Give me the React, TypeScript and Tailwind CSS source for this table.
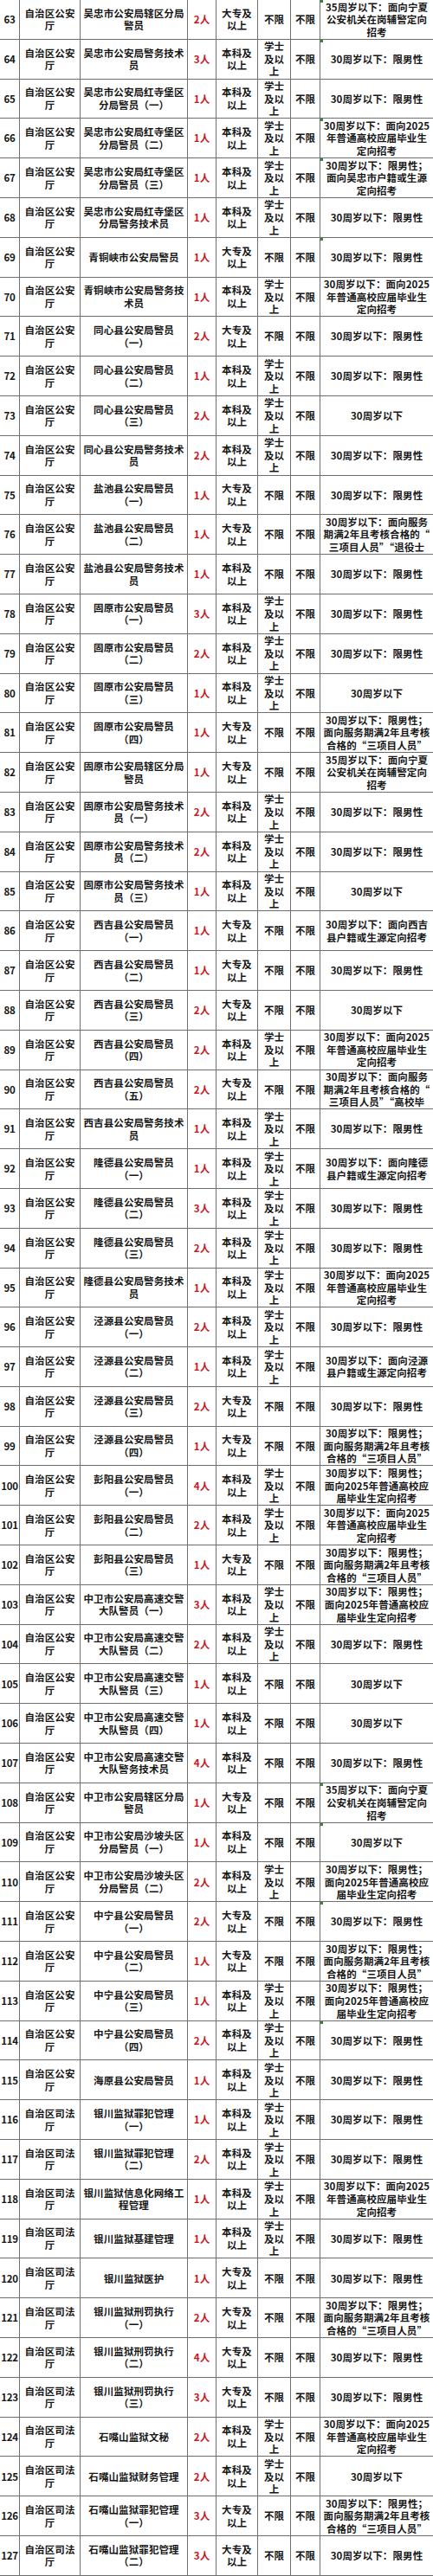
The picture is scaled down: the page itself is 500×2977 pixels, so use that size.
import React from 'react';

// [序号, 职位, 人数, 学历(D=大专 B=本科), 学士学位?, 备注, 绿色标记?]
type Row = [number, string, number, 'D' | 'B', boolean, string, boolean?];

const R1 = '30周岁以下：限男性';
const R0 = '30周岁以下';
const R2025 = '30周岁以下：面向2025\n年普通高校应届毕业生\n定向招考';
const RM2025 = '30周岁以下：限男性；\n面向2025年普通高校应\n届毕业生定向招考';
const RSX = '30周岁以下：限男性；\n面向服务期满2年且考核\n合格的“三项目人员”';
const R35 = '35周岁以下：面向宁夏\n公安机关在岗辅警定向\n招考';

const rows: Row[] = [
  [63, '吴忠市公安局辖区分局\n警员', 2, 'D', false, R35, true],
  [64, '吴忠市公安局警务技术\n员', 3, 'B', true, R1, true],
  [65, '吴忠市公安局红寺堡区\n分局警员（一）', 1, 'B', true, R1],
  [66, '吴忠市公安局红寺堡区\n分局警员（二）', 1, 'B', true, R2025, true],
  [67, '吴忠市公安局红寺堡区\n分局警员（三）', 1, 'B', true, '30周岁以下：限男性；\n面向吴忠市户籍或生源\n定向招考', true],
  [68, '吴忠市公安局红寺堡区\n分局警务技术员', 1, 'B', true, R1],
  [69, '青铜峡市公安局警员', 1, 'D', false, R1, true],
  [70, '青铜峡市公安局警务技\n术员', 1, 'B', true, R2025],
  [71, '同心县公安局警员\n（一）', 2, 'D', false, R1],
  [72, '同心县公安局警员\n（二）', 1, 'B', true, R1],
  [73, '同心县公安局警员\n（三）', 2, 'B', true, R0],
  [74, '同心县公安局警务技术\n员', 2, 'B', true, R1],
  [75, '盐池县公安局警员\n（一）', 1, 'D', false, R1],
  [76, '盐池县公安局警员\n（二）', 1, 'D', false, '30周岁以下：面向服务\n期满2年且考核合格的“\n三项目人员”“退役士'],
  [77, '盐池县公安局警务技术\n员', 1, 'B', false, R1],
  [78, '固原市公安局警员\n（一）', 3, 'B', true, R1],
  [79, '固原市公安局警员\n（二）', 2, 'B', true, R1],
  [80, '固原市公安局警员\n（三）', 1, 'B', true, R0],
  [81, '固原市公安局警员\n（四）', 1, 'D', false, RSX],
  [82, '固原市公安局辖区分局\n警员', 1, 'D', false, R35],
  [83, '固原市公安局警务技术\n员（一）', 2, 'B', true, R1],
  [84, '固原市公安局警务技术\n员（二）', 2, 'B', true, R1],
  [85, '固原市公安局警务技术\n员（三）', 1, 'B', true, R0],
  [86, '西吉县公安局警员\n（一）', 1, 'D', false, '30周岁以下：面向西吉\n县户籍或生源定向招考'],
  [87, '西吉县公安局警员\n（二）', 1, 'D', false, R1],
  [88, '西吉县公安局警员\n（三）', 2, 'D', false, R0],
  [89, '西吉县公安局警员\n（四）', 2, 'B', true, R2025],
  [90, '西吉县公安局警员\n（五）', 2, 'D', false, '30周岁以下：面向服务\n期满2年且考核合格的“\n三项目人员”“高校毕'],
  [91, '西吉县公安局警务技术\n员', 1, 'B', true, R1],
  [92, '隆德县公安局警员\n（一）', 1, 'B', true, '30周岁以下：面向隆德\n县户籍或生源定向招考'],
  [93, '隆德县公安局警员\n（二）', 3, 'B', true, R1],
  [94, '隆德县公安局警员\n（三）', 2, 'B', true, R1],
  [95, '隆德县公安局警务技术\n员', 1, 'B', true, R2025],
  [96, '泾源县公安局警员\n（一）', 2, 'B', true, R1],
  [97, '泾源县公安局警员\n（二）', 1, 'B', true, '30周岁以下：面向泾源\n县户籍或生源定向招考'],
  [98, '泾源县公安局警员\n（三）', 2, 'D', false, R1],
  [99, '泾源县公安局警员\n（四）', 1, 'D', false, RSX],
  [100, '彭阳县公安局警员\n（一）', 4, 'B', true, RM2025],
  [101, '彭阳县公安局警员\n（二）', 2, 'B', true, R2025],
  [102, '彭阳县公安局警员\n（三）', 1, 'D', false, RSX],
  [103, '中卫市公安局高速交警\n大队警员（一）', 3, 'B', true, RM2025],
  [104, '中卫市公安局高速交警\n大队警员（二）', 2, 'B', true, R1],
  [105, '中卫市公安局高速交警\n大队警员（三）', 1, 'B', false, R0],
  [106, '中卫市公安局高速交警\n大队警员（四）', 1, 'B', false, R0],
  [107, '中卫市公安局高速交警\n大队警务技术员', 4, 'B', false, R1],
  [108, '中卫市公安局辖区分局\n警员', 1, 'D', false, R35, true],
  [109, '中卫市公安局沙坡头区\n分局警员（一）', 1, 'B', false, R0, true],
  [110, '中卫市公安局沙坡头区\n分局警员（二）', 2, 'B', true, RM2025],
  [111, '中宁县公安局警员\n（一）', 2, 'D', false, R1, true],
  [112, '中宁县公安局警员\n（二）', 1, 'D', false, RSX],
  [113, '中宁县公安局警员\n（三）', 1, 'B', true, RM2025],
  [114, '中宁县公安局警员\n（四）', 2, 'B', true, R1, true],
  [115, '海原县公安局警员', 1, 'B', true, R1],
  [116, '银川监狱罪犯管理\n（一）', 1, 'B', true, R1],
  [117, '银川监狱罪犯管理\n（二）', 2, 'B', true, R1],
  [118, '银川监狱信息化网络工\n程管理', 1, 'B', true, R2025],
  [119, '银川监狱基建管理', 1, 'B', true, R1],
  [120, '银川监狱医护', 1, 'D', false, R1],
  [121, '银川监狱刑罚执行\n（一）', 2, 'D', false, RSX],
  [122, '银川监狱刑罚执行\n（二）', 4, 'D', false, R1],
  [123, '银川监狱刑罚执行\n（三）', 3, 'D', false, R1],
  [124, '石嘴山监狱文秘', 2, 'B', true, R2025],
  [125, '石嘴山监狱财务管理', 2, 'B', true, R0],
  [126, '石嘴山监狱罪犯管理\n（一）', 3, 'D', false, RSX],
  [127, '石嘴山监狱罪犯管理\n（二）', 3, 'D', false, R1],
];

const cell =
  'relative flex items-center justify-center text-center whitespace-pre overflow-hidden border-r border-[#6f6f6f]';

function TableRow({ row }: { row: Row }) {
  const [no, post, count, edu, degree, remark, mark] = row;
  const dept = no >= 116 ? '自治区司法\n厅' : '自治区公安\n厅';
  return (
    <div className="grid grid-cols-[23px_70px_124px_33px_48px_38px_34px_130px] h-[45.8px] border-b border-[#6f6f6f]">
      <div className={`${cell} tracking-[-0.3px]`}>{no}</div>
      <div className={cell}>{dept}</div>
      <div className={cell}>{post}</div>
      <div className={`${cell} text-[#c8161d]`}>{count}人</div>
      <div className={cell}>{edu === 'D' ? '大专及\n以上' : '本科及\n以上'}</div>
      <div className={cell}>{degree ? '学士\n及以\n上' : '不限'}</div>
      <div className={cell}>不限</div>
      <div className="relative flex items-center justify-center text-center whitespace-pre overflow-hidden">
        {mark && <span className="absolute left-0 top-0 w-[3px] h-[3px] bg-[#2e8b3a]" />}
        {remark}
      </div>
    </div>
  );
}

export default function App() {
  return (
    <div
      className="w-[500px] bg-white text-[#161616] text-[11.5px] leading-[14.6px] tracking-[0.1px] font-semibold"
      style={{ fontFamily: '"Noto Sans CJK SC", "Noto Sans", sans-serif' }}
    >
      {rows.map((r) => (
        <TableRow key={r[0]} row={r} />
      ))}
    </div>
  );
}
